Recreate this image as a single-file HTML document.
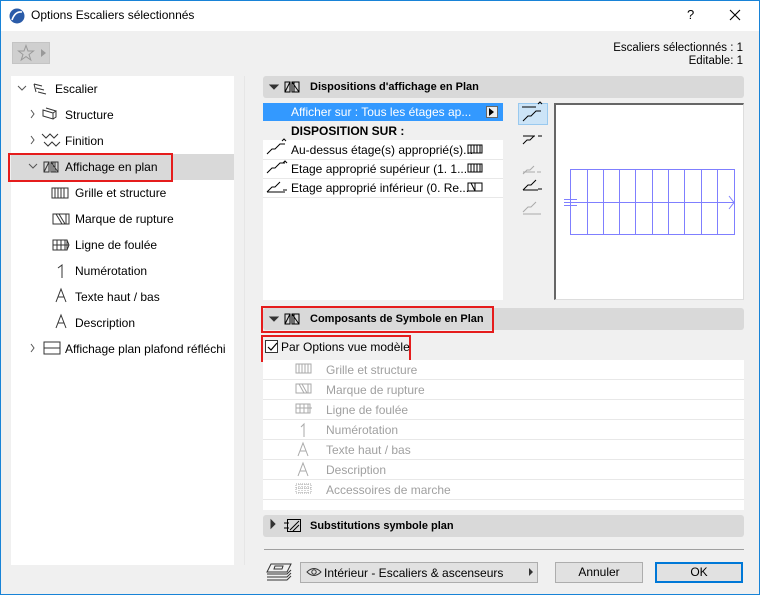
<!DOCTYPE html>
<html><head><meta charset="utf-8"><style>
*{box-sizing:border-box;margin:0;padding:0}
body{width:760px;height:595px;overflow:hidden;background:#f0f0f0;font-family:"Liberation Sans",sans-serif;font-size:12px;color:#000;position:relative}
.a{position:absolute}
.win{left:0;top:0;width:760px;height:595px;border:1px solid #1883d7}
.hdr{background:#d9d9d9;border-radius:3px;font-weight:bold;font-size:11px;line-height:22px;padding-left:47px}
.t{position:absolute;white-space:nowrap}
.gr{color:#a0a0a0}
.row{position:absolute;left:263px;width:481px;height:20px;border-bottom:1px solid #e8e8e8;background:#fff}
</style></head><body>
<div class="a" style="left:0;top:0;width:760px;height:31px;background:#fff"></div>
<div class="a win"></div>
<svg class="a" style="left:9px;top:8px" width="16" height="16"><circle cx="8" cy="8" r="7.5" fill="#2a5ba8"/><path d="M3 12 Q6 3 13 4" stroke="#fff" stroke-width="1.6" fill="none"/></svg>
<div class="t" style="left:31px;top:8px;font-size:12px">Options Escaliers sélectionnés</div>
<div class="t" style="left:687px;top:7px;font-size:13px">?</div>
<svg class="a" style="left:729px;top:9px" width="12" height="12"><path d="M1 1L11 11M11 1L1 11" stroke="#000" stroke-width="1.1"/></svg>

<div class="a" style="left:12px;top:42px;width:38px;height:22px;background:#cfcfcf;border:1px solid #c4c4c4"></div>
<svg class="a" style="left:17px;top:44px" width="18" height="18"><path d="M9 1.5L11 7H16.5L12 10.5L13.8 16L9 12.6L4.2 16L6 10.5L1.5 7H7Z" fill="none" stroke="#999" stroke-width="1"/></svg>
<svg class="a" style="left:41px;top:49px" width="6" height="8"><path d="M0 0L5 4L0 8Z" fill="#999"/></svg>
<div class="t" style="right:17px;top:42px;text-align:right;line-height:13px;font-size:11.5px">Escaliers sélectionnés : 1<br>Editable: 1</div>

<!-- left tree -->
<div class="a" style="left:11px;top:76px;width:223px;height:489px;background:#fff"></div>
<div class="a" style="left:244px;top:76px;width:1px;height:489px;background:#e6e6e6"></div>
<div class="a" style="left:11px;top:154px;width:223px;height:26px;background:#d9d9d9"></div>
<div class="a" style="left:8px;top:153px;width:165px;height:29px;border:2px solid #e51c1c"></div>
<svg class="a" style="left:0;top:0" width="250" height="565" fill="none" stroke="#333" stroke-width="1">
<path d="M18 86l4 4 4-4M31 110l3 4-3 4M31 136l3 4-3 4M29 164l4 4 4-4M31 344l3 4-3 4" stroke="#555"/>
<path d="M34 84l8 2M36 88l8 2M38 92l8 2M34 84l2 8"/>
<path d="M43 110l10 3v6l-10-3zM46 108l10 3M53 113l3-2v6l-3 2"/>
<path d="M42 134l4 4 4-4 4 4 4-4M44 142l4 4 4-4 4 4 4-4"/>
<path d="M44 162h5v10h-5zM51 162h7v10h-7zM44 172l5-10M51 162l7 10M53 162v10M55 162v10"/>
<path d="M52 188h16v10h-16zM55 188v10M58 188v10M61 188v10M64 188v10"/>
<path d="M53 214h16v10h-16zM56 214l6 10M59 214l6 10M66 214v10"/>
<path d="M53 240h14v10h-14zM53 245h16M57 240v10M61 240v10M65 240v10M67 240l2 5-2 5"/>
<path d="M58 268l4-3v13"/>
<path d="M56 302l5-13 5 13M58 297h6"/>
<path d="M56 328l5-13 5 13M58 323h6"/>
<path d="M44 342h16v12h-16zM44 348h16"/>
</svg>
<div class="t" style="left:55px;top:82px">Escalier</div>
<div class="t" style="left:65px;top:108px">Structure</div>
<div class="t" style="left:65px;top:134px">Finition</div>
<div class="t" style="left:65px;top:160px">Affichage en plan</div>
<div class="t" style="left:75px;top:186px">Grille et structure</div>
<div class="t" style="left:75px;top:212px">Marque de rupture</div>
<div class="t" style="left:75px;top:238px">Ligne de foulée</div>
<div class="t" style="left:75px;top:264px">Numérotation</div>
<div class="t" style="left:75px;top:290px">Texte haut / bas</div>
<div class="t" style="left:75px;top:316px">Description</div>
<div class="t" style="left:65px;top:342px">Affichage plan plafond réfléchi</div>

<!-- right -->
<div class="a hdr" style="left:263px;top:76px;width:481px;height:22px">Dispositions d'affichage en Plan</div>
<div class="a" style="left:263px;top:103px;width:240px;height:197px;background:#fff"></div>
<div class="a" style="left:263px;top:103px;width:240px;height:18px;background:#3399ff"></div>
<div class="t" style="left:291px;top:105px;color:#fff">Afficher sur : Tous les étages ap...</div>
<div class="a" style="left:486px;top:106px;width:12px;height:12px;background:#eee;border:1px solid #666"></div>
<svg class="a" style="left:489px;top:108px" width="6" height="8"><path d="M0 0L5 4L0 8Z" fill="#000"/></svg>
<div class="a" style="left:263px;top:121px;width:240px;height:19px;background:#f0f0f0"></div>
<div class="t" style="left:291px;top:124px;font-weight:bold">DISPOSITION SUR :</div>
<div class="a" style="left:263px;top:159px;width:240px;height:1px;background:#e8e8e8"></div>
<div class="a" style="left:263px;top:178px;width:240px;height:1px;background:#e8e8e8"></div>
<div class="a" style="left:263px;top:197px;width:240px;height:1px;background:#e8e8e8"></div>
<div class="t" style="left:291px;top:143px">Au-dessus étage(s) approprié(s)...</div>
<div class="t" style="left:291px;top:162px">Etage approprié supérieur (1. 1...</div>
<div class="t" style="left:291px;top:181px">Etage approprié inférieur (0. Re...</div>
<svg class="a" style="left:263px;top:100px" width="290" height="130" fill="none" stroke="#000" stroke-width="1">
<path d="M205 45h14v8h-14zM208 45v8M211 45v8M214 45v8M217 45v8" fill="#fff"/>
<path d="M205 64h14v8h-14zM208 64v8M211 64v8M214 64v8M217 64v8" fill="#fff"/>
<path d="M205 83h14v8h-14zM208 83l4 8M212 83v8" fill="#fff"/>
<path d="M4 54l5-5h3l5-5h5M19 41l2-2 2 2"/>
<path d="M4 73l5-5h3l5-5h5M20 63l2-2 2 2" />
<path d="M4 92l5-5h3l5-5M4 92h18M20 90h4"/>
</svg>
<div class="a" style="left:516px;top:103px;width:32px;height:197px;background:#f0f0f0"></div>
<div class="a" style="left:518px;top:103px;width:30px;height:22px;background:#cce4f7;border:1px solid #99c9ef"></div>
<svg class="a" style="left:516px;top:100px" width="32" height="130" fill="none" stroke="#000">
<path d="M7 21l5-5h3l5-5h5M6 7h14M22 4l2-2 2 2"/>
<path d="M7 44l4-4h3l4-4M7 36h12M22 36h4"/>
<path d="M7 74l4-4h3l4-4M7 72h12M21 72h4" stroke="#aaa"/>
<path d="M7 90l5-5h3l5-5M7 90h15M22 89h4"/>
<path d="M7 112l5-5h3l5-5M7 114h18" stroke="#aaa"/>
</svg>
<div class="a" style="left:554px;top:103px;width:190px;height:197px;background:#fff;border-top:2px solid #666;border-left:2px solid #666;border-right:1px solid #ddd;border-bottom:1px solid #ddd"></div>
<svg class="a" style="left:560px;top:160px" width="180" height="85" fill="none" stroke="#7f7fff" stroke-width="1">
<rect x="10.5" y="9.5" width="164" height="65"/>
<path d="M27.5 9v66M43.5 9v66M59.5 9v66M75.5 9v66M92.5 9v66M108.5 9v66M124.5 9v66M141.5 9v66M157.5 9v66M4 42.5h170M4 39.5h13M4 45.5h13M169 36l5 6.5-5 6.5"/>
</svg>

<div class="a hdr" style="left:263px;top:308px;width:481px;height:22px">Composants de Symbole en Plan</div>
<div class="a hdr" style="left:263px;top:515px;width:481px;height:22px">Substitutions symbole plan</div>
<svg class="a" style="left:263px;top:76px" width="40" height="470" fill="none" stroke="#000">
<path d="M7 9l4 4 4-4z" fill="#333" stroke="#333"/>
<path d="M22 6h5v10h-5zM29 6h7v10h-7zM22 16l5-10M29 6l7 10M31 6v10"/>
<path d="M7 241l4 4 4-4z" fill="#333" stroke="#333"/>
<path d="M22 238h5v10h-5zM29 238h7v10h-7zM22 248l5-10M29 238l7 10M31 238v10"/>
<path d="M8 444l4 4-4 4z" fill="#333" stroke="#333"/>
<path d="M24.5 443.5h13v12h-13zM27 454l9-9M30 455l6-6M21 447h5M21 452h5"/>
</svg>
<div class="a" style="left:261px;top:306px;width:233px;height:27px;border:2px solid #e51c1c"></div>
<div class="a" style="left:261px;top:335px;width:150px;height:27px;border:2px solid #e51c1c"></div>
<div class="a" style="left:265px;top:340px;width:13px;height:13px;border:1px solid #333;background:#fff"></div>
<svg class="a" style="left:266px;top:341px" width="12" height="12"><path d="M2 6l3 3 6-7" stroke="#000" fill="none" stroke-width="1.2"/></svg>
<div class="t" style="left:281px;top:340px">Par Options vue modèle</div>
<div class="row" style="top:360px"></div><div class="row" style="top:380px"></div><div class="row" style="top:400px"></div><div class="row" style="top:420px"></div><div class="row" style="top:440px"></div><div class="row" style="top:460px"></div><div class="row" style="top:480px"></div><div class="row" style="top:500px;height:10px;border:0"></div>
<svg class="a" style="left:290px;top:360px" width="30" height="145" fill="none" stroke="#aaa">
<path d="M6 4h15v9h-15zM9 4v9M12 4v9M15 4v9M18 4v9"/>
<path d="M6 24h15v9h-15zM9 24l5 9M12 24l5 9M18 24v9"/>
<path d="M6 44h14v9h-14zM6 48h16M10 44v9M14 44v9M18 44v9"/>
<path d="M11 67l3-3v13"/>
<path d="M8 96l5-13 5 13M10 91h6"/>
<path d="M8 116l5-13 5 13M10 111h6"/>
<path d="M6 124h15v9h-15zM9 124v9M12 124v9M15 124v9M18 124v9M6 128h15" stroke-dasharray="1 1"/>
</svg>
<div class="t gr" style="left:326px;top:363px">Grille et structure</div>
<div class="t gr" style="left:326px;top:383px">Marque de rupture</div>
<div class="t gr" style="left:326px;top:403px">Ligne de foulée</div>
<div class="t gr" style="left:326px;top:423px">Numérotation</div>
<div class="t gr" style="left:326px;top:443px">Texte haut / bas</div>
<div class="t gr" style="left:326px;top:463px">Description</div>
<div class="t gr" style="left:326px;top:483px">Accessoires de marche</div>

<div class="a" style="left:264px;top:549px;width:480px;height:1px;background:#a0a0a0"></div>
<svg class="a" style="left:265px;top:562px" width="28" height="22" fill="none" stroke="#333"><path d="M6 2h20l-4 8h-20zM2 12h20l4-4M2 15h20l4-4M2 18h20l4-4M10 4h8l-1 3h-8z"/></svg>
<div class="a" style="left:300px;top:562px;width:238px;height:21px;background:#e1e1e1;border:1px solid #adadad"></div>
<svg class="a" style="left:306px;top:566px" width="16" height="12" fill="none" stroke="#333"><path d="M1 6Q8 -1 15 6Q8 13 1 6z"/><circle cx="8" cy="6" r="2.2"/></svg>
<div class="t" style="left:324px;top:566px">Intérieur - Escaliers &amp; ascenseurs</div>
<svg class="a" style="left:529px;top:568px" width="5" height="8"><path d="M0 0L4 4L0 8Z" fill="#333"/></svg>
<div class="a" style="left:555px;top:562px;width:88px;height:21px;background:#e1e1e1;border:1px solid #adadad;text-align:center;line-height:19px">Annuler</div>
<div class="a" style="left:655px;top:562px;width:88px;height:21px;background:#e1e1e1;border:2px solid #0078d7;text-align:center;line-height:17px">OK</div>
</body></html>
